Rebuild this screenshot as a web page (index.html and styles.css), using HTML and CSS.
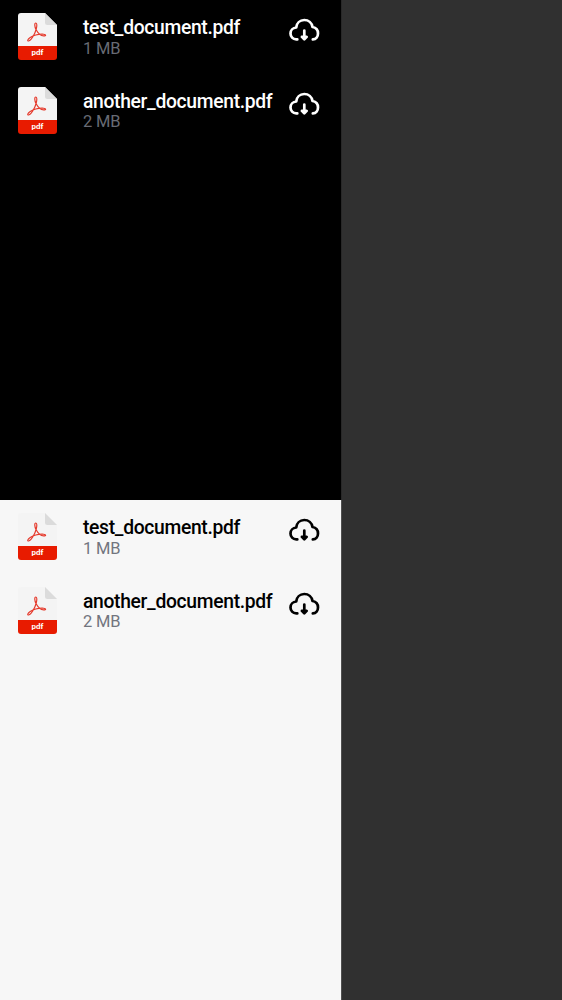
FILE: index.html
```html
<!DOCTYPE html>
<html lang="en">
<head>
<meta charset="utf-8">
<title>Documents</title>
<link rel="stylesheet" href="styles.css">
</head>
<body>
<svg class="defs" width="0" height="0" aria-hidden="true">
  <symbol id="file" viewBox="0 0 39 47">
    <path fill="#f4f4f4" d="M3 0H27L39 12V36H0V3Q0 0 3 0Z"/>
    <path fill="#dbdbdb" d="M27 0L39 12H29.500Q27 12 27 9.500Z"/>
    <path fill="#e81b00" d="M0 32.900H39V44Q39 47 36 47H3Q0 47 0 44Z"/>
    <path fill="none" stroke="#e5392b" stroke-width="1.150" stroke-linejoin="round" d="M17.900 10C16.300 10 16.500 13.500 18 16.500C20 20.200 23.200 22.800 25.600 22.900C28.300 23 28.300 21.300 25.600 21.200C21.200 21 15.600 22.300 12.200 24.600C9.200 26.600 9.200 28.300 10.700 28C13.200 27.500 16.900 21 18.100 16.500C19.100 13 19.100 10 17.900 10Z"/>
  </symbol>
  <symbol id="cloud" viewBox="0 0 31 24">
    <g fill="none" stroke="currentColor" stroke-width="2.700" stroke-linecap="round" stroke-linejoin="round">
      <path d="M8.300 21.400H7.200C3.900 21.400 1.500 18.800 1.500 15.500C1.500 12.200 4 9.700 7.200 9.500C7.700 5.200 10.900 2 15.200 2C19.600 2 22.800 4.800 23.500 9C26.900 9.600 29 12.100 29 15.400C29 18.700 27 21.200 23.800 21.400"/>
      <path d="M15.300 12.500V20M12.900 18.900L15.300 21.300L17.700 18.900Z"/>
    </g>
  </symbol>
</svg>
<main class="screen">
  <section class="panel panel-dark">
    <article class="row">
      <div class="file"><svg class="file-art"><use href="#file"/></svg><span class="ext">pdf</span></div>
      <div class="info"><div class="name">test_document.pdf</div><div class="size">1 MB</div></div>
      <svg class="cloud"><use href="#cloud"/></svg>
    </article>
    <article class="row">
      <div class="file"><svg class="file-art"><use href="#file"/></svg><span class="ext">pdf</span></div>
      <div class="info"><div class="name">another_document.pdf</div><div class="size">2 MB</div></div>
      <svg class="cloud"><use href="#cloud"/></svg>
    </article>
  </section>
  <section class="panel panel-light">
    <article class="row">
      <div class="file"><svg class="file-art"><use href="#file"/></svg><span class="ext">pdf</span></div>
      <div class="info"><div class="name">test_document.pdf</div><div class="size">1 MB</div></div>
      <svg class="cloud"><use href="#cloud"/></svg>
    </article>
    <article class="row">
      <div class="file"><svg class="file-art"><use href="#file"/></svg><span class="ext">pdf</span></div>
      <div class="info"><div class="name">another_document.pdf</div><div class="size">2 MB</div></div>
      <svg class="cloud"><use href="#cloud"/></svg>
    </article>
  </section>
</main>
</body>
</html>
```
FILE: styles.css
```css
* { box-sizing: border-box; }
body {
  margin: 0;
  height: 1000px;
  background: #303030;
  font-family: Roboto, "Liberation Sans", sans-serif;
  overflow: hidden;
}
.defs { display: none; }
.screen {
  display: grid;
  grid-template-rows: 500px 500px;
  width: 342px;
}
.panel-dark { background: #000; color: #fff; border-right: 1px solid #282828; }
.panel-light { background: #f7f7f7; color: #000; border-right: 1px solid #505050; }
.row {
  display: flex;
  height: 73.400px;
  padding: 13.300px 21px 0 18px;
}
.file {
  position: relative;
  width: 39px;
  height: 47px;
  margin-right: 26px;
}
.file-art { display: block; width: 39px; height: 47px; }
.ext {
  position: absolute;
  left: 0;
  bottom: 2px;
  width: 39px;
  text-align: center;
  font: 700 8px/11px Roboto, sans-serif;
  color: #fff;
}
.info { flex: 1; min-width: 0; padding-top: 3.900px; white-space: nowrap; }
.name { font-size: 19.300px; font-weight: 500; line-height: 21.800px; letter-spacing: -0.320px; }
.size { font-size: 16.500px; line-height: 19px; letter-spacing: -0.150px; color: #72757e; }
.panel-dark .size { color: #686b74; }
.cloud { width: 31px; height: 24px; margin-top: 5px; }
```
